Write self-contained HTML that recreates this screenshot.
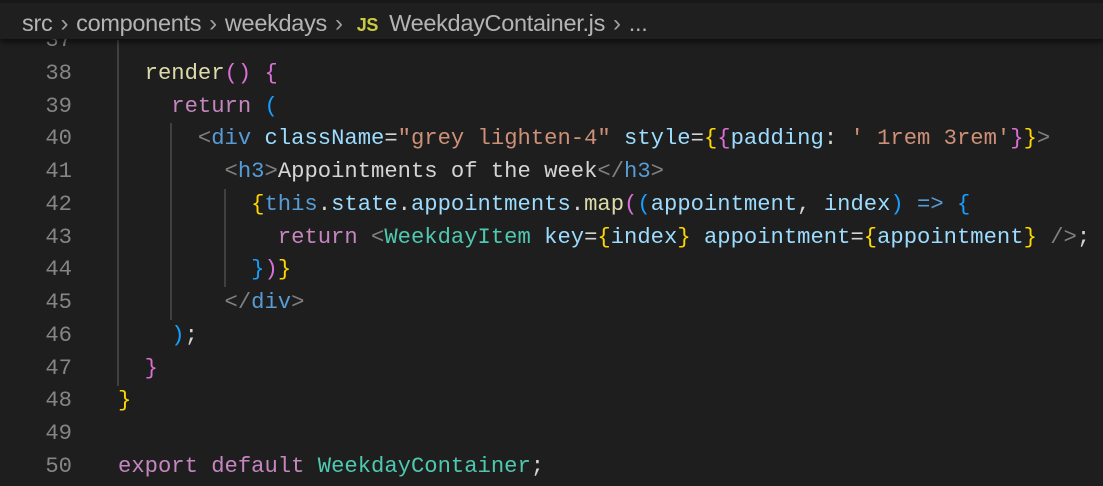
<!DOCTYPE html>
<html><head><meta charset="utf-8"><style>
html,body{margin:0;padding:0;background:#1e1e1e;width:1103px;height:486px;overflow:hidden}
.bc{position:absolute;left:0;top:0;width:1103px;height:39px;background:#1f1f1f;z-index:2;box-shadow:0 3px 5px rgba(0,0,0,.55);font:23.5px "Liberation Sans",sans-serif;color:#b4b4b4;line-height:46px;padding-left:22px;box-sizing:border-box;white-space:pre;letter-spacing:-0.3px}
.bc .top{position:absolute;left:0;top:0;width:1103px;height:3px;background:#181818}
.sep{color:#a0a0a0;margin:0 8px;font-size:24px}
.js{color:#cbcb41;font-weight:bold;font-size:18px;margin-left:6px;margin-right:11px}
.code{position:absolute;left:0;top:25px;width:1103px;font:22.2px/32.75px "Liberation Mono",monospace;color:#d4d4d4}
.ln{position:absolute;left:0;width:72px;text-align:right;color:#858585}
.tx{position:absolute;left:118px;white-space:pre}
.row{position:relative;height:32.75px}
.g{position:absolute;width:2px;background:#404040;z-index:1}
.k{color:#c586c0}.f{color:#dcdcaa}.y{color:#ffd700}.p{color:#da70d6}.b{color:#179fff}
.t{color:#808080}.n{color:#569cd6}.c{color:#4ec9b0}.a{color:#9cdcfe}.s{color:#ce9178}
</style></head><body>
<div class="bc"><div class="top"></div>src<span class="sep">›</span>components<span class="sep">›</span>weekdays<span class="sep">›</span><span class="js">JS</span>WeekdayContainer.js<span class="sep">›</span>...</div>
<div class="g" style="left:117px;top:40px;height:346px"></div>
<div class="g" style="left:170px;top:123px;height:197px"></div>
<div class="g" style="left:224px;top:189px;height:98px"></div>
<div class="code"><div class="row"><span class="ln">37</span></div><div class="row"><span class="ln">38</span><span class="tx">  <span class="f">render</span><span class="p">()</span> <span class="p">{</span></span></div><div class="row"><span class="ln">39</span><span class="tx">    <span class="k">return</span> <span class="b">(</span></span></div><div class="row"><span class="ln">40</span><span class="tx">      <span class="t">&lt;</span><span class="n">div</span> <span class="a">className</span>=<span class="s">"grey lighten-4"</span> <span class="a">style</span>=<span class="y">{</span><span class="p">{</span><span class="a">padding</span>: <span class="s">' 1rem 3rem'</span><span class="p">}</span><span class="y">}</span><span class="t">&gt;</span></span></div><div class="row"><span class="ln">41</span><span class="tx">        <span class="t">&lt;</span><span class="n">h3</span><span class="t">&gt;</span>Appointments of the week<span class="t">&lt;/</span><span class="n">h3</span><span class="t">&gt;</span></span></div><div class="row"><span class="ln">42</span><span class="tx">          <span class="y">{</span><span class="n">this</span>.<span class="a">state</span>.<span class="a">appointments</span>.<span class="f">map</span><span class="p">(</span><span class="b">(</span><span class="a">appointment</span>, <span class="a">index</span><span class="b">)</span> <span class="n">=&gt;</span> <span class="b">{</span></span></div><div class="row"><span class="ln">43</span><span class="tx">            <span class="k">return</span> <span class="t">&lt;</span><span class="c">WeekdayItem</span> <span class="a">key</span>=<span class="y">{</span><span class="a">index</span><span class="y">}</span> <span class="a">appointment</span>=<span class="y">{</span><span class="a">appointment</span><span class="y">}</span> <span class="t">/&gt;</span>;</span></div><div class="row"><span class="ln">44</span><span class="tx">          <span class="b">}</span><span class="p">)</span><span class="y">}</span></span></div><div class="row"><span class="ln">45</span><span class="tx">        <span class="t">&lt;/</span><span class="n">div</span><span class="t">&gt;</span></span></div><div class="row"><span class="ln">46</span><span class="tx">    <span class="b">)</span>;</span></div><div class="row"><span class="ln">47</span><span class="tx">  <span class="p">}</span></span></div><div class="row"><span class="ln">48</span><span class="tx"><span class="y">}</span></span></div><div class="row"><span class="ln">49</span></div><div class="row"><span class="ln">50</span><span class="tx"><span class="k">export</span> <span class="k">default</span> <span class="c">WeekdayContainer</span>;</span></div></div>
</body></html>
